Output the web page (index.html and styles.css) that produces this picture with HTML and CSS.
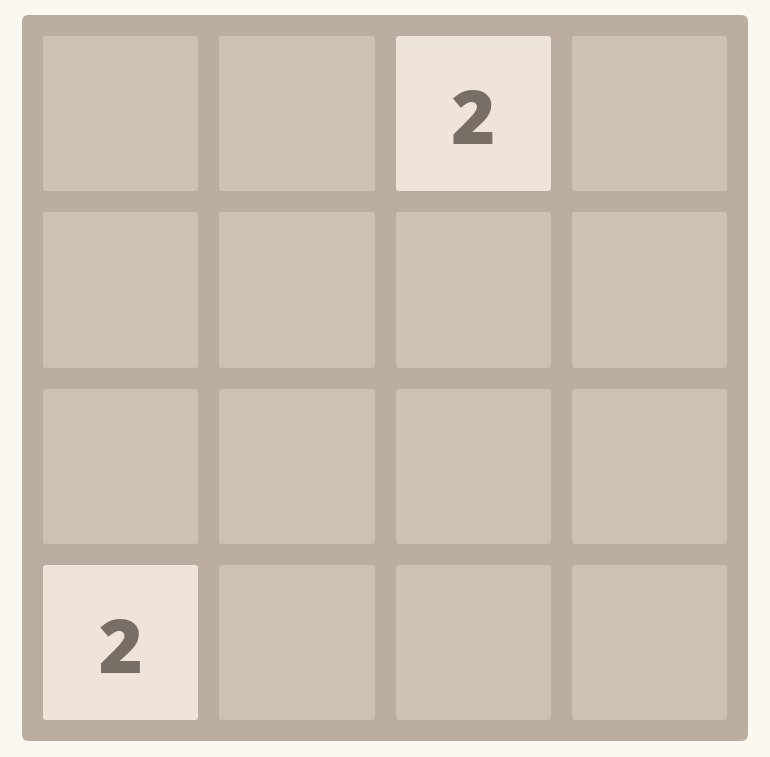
FILE: index.html
```html
<!DOCTYPE html>
<html lang="en">
<head>
    <meta charset="UTF-8">
    <meta name="viewport" content="width=device-width, initial-scale=1.0">
    <title>2048</title>
    <link rel="stylesheet" href="styles.css">
</head>
<body>
    <div class="board">
        <div class="cell"></div>
        <div class="cell"></div>
        <div class="cell tile-2">2</div>
        <div class="cell"></div>

        <div class="cell"></div>
        <div class="cell"></div>
        <div class="cell"></div>
        <div class="cell"></div>

        <div class="cell"></div>
        <div class="cell"></div>
        <div class="cell"></div>
        <div class="cell"></div>

        <div class="cell tile-2">2</div>
        <div class="cell"></div>
        <div class="cell"></div>
        <div class="cell"></div>
    </div>
</body>
</html>
```

FILE: styles.css
```css
body {
    margin: 0;
    padding: 15px 0 0 22px;
    background: #faf8ef;
    font-family: "Open Sans", Arial, sans-serif;
}
.board {
    width: 726px;
    height: 726px;
    box-sizing: border-box;
    padding: 21px;
    background: #bbada0;
    border-radius: 6px;
    display: grid;
    grid-template-columns: repeat(4, 1fr);
    grid-template-rows: repeat(4, 1fr);
    gap: 21px;
}
.cell {
    background: #cdc1b4;
    border-radius: 3px;
    display: flex;
    align-items: center;
    justify-content: center;
}
.tile-2 {
    background: #eee4da;
    color: #776e65;
    font-size: 75px;
    font-weight: 800;
    line-height: 1;
    padding-top: 4px;
}
```
